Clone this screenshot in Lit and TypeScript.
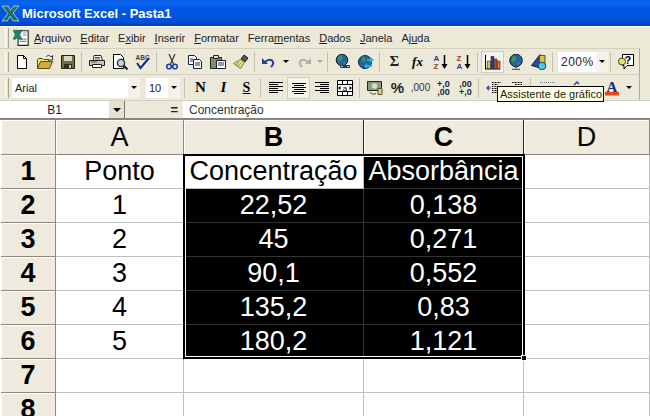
import { LitElement, html, css, svg } from "lit";
import { customElement } from "lit/decorators.js";

const I: Record<string, any> = {
  new: svg`<path d="M3.500 1.500h6l3 3v10h-9z" fill="#fff" stroke="#000"/><path d="M9.500 1.500v3h3" fill="none" stroke="#000"/>`,
  open: svg`<path d="M.500 14.500v-9l1-1h4l1 1h5v2" fill="#f7e488" stroke="#5a4c10"/><path d="M.500 14.500l3-7h12l-3 7z" fill="#cfae3c" stroke="#5a4c10"/><path d="M9 3c1.500-2 3.500-2 5 0l1.500-1.500V6h-4" fill="none" stroke="#333"/>`,
  save: svg`<path d="M1.500 1.500h13v13h-13z" fill="#6f7040" stroke="#22220f"/><path d="M4 2h8v5H4z" fill="#d8d8c8"/><path d="M4 10h8v5H4z" fill="#30301c"/><path d="M9 11h2v3H9z" fill="#ccc"/>`,
  print: svg`<path d="M5 1.500h7l1.500 5h-9z" fill="#fff" stroke="#222"/><path d="M.500 6.500h15v5H.500z" fill="#c8c8c0" stroke="#222"/><path d="M3.500 10.500h9v3h-9z" fill="#fff" stroke="#222"/><path d="M2 8h6M6 3.500h5M6 5h5" stroke="#555"/>`,
  preview: svg`<path d="M1.500 .500h7l3 3v11h-10z" fill="#fff" stroke="#000"/><circle cx="9" cy="9" r="3.600" fill="#bcd8e0" stroke="#333" stroke-width="1.400"/><path d="M11.500 11.500l4 4" stroke="#222" stroke-width="2.200"/>`,
  spell: svg`<text x=".5" y="6" font-family="Liberation Sans" font-size="6.500" font-weight="700" fill="#444">ABC</text><path d="M2 9l3.500 5L14 4" fill="none" stroke="#1a2a8c" stroke-width="2"/>`,
  cut: svg`<path d="M5 0l4.500 10M11 0L6.500 10" stroke="#333" stroke-width="1.200"/><circle cx="5" cy="12.500" r="2.300" fill="none" stroke="#2040a0" stroke-width="1.600"/><circle cx="11" cy="12.500" r="2.300" fill="none" stroke="#2040a0" stroke-width="1.600"/>`,
  copy: svg`<path d="M1.500 1.500h6l2 2v7h-8z" fill="#fff" stroke="#123"/><path d="M6.500 5.500h6l2 2v7h-8z" fill="#fff" stroke="#123"/><path d="M8 9h5M8 11h5M3 5h3M3 7h3" stroke="#235"/>`,
  paste: svg`<path d="M.500 3.500h11v11H.500z" fill="#8a8a60" stroke="#222"/><path d="M3.500 1.500h5v3h-5z" fill="#ddd" stroke="#222"/><path d="M6.500 6.500h9v8h-9z" fill="#fff" stroke="#123"/><path d="M8 9h6M8 11h6" stroke="#235"/>`,
  brush: svg`<path d="M11 1l4 3-3 4-4-3z" fill="#555" stroke="#222"/><path d="M7.500 5.500l4 3-4 6-7-5z" fill="#f0d878" stroke="#776" /><path d="M3 11l3-3M5 12l3-3" stroke="#b09830"/>`,
  undo: svg`<path d="M1 4v6h6z" fill="#24409c"/><path d="M4 8c3-3 7-3 8 0 1 2-1 4-2 5" fill="none" stroke="#24409c" stroke-width="2"/>`,
  redo: svg`<path d="M15 4v6H9z" fill="#b0b0a8"/><path d="M12 8C9 5 5 5 4 8c-1 2 1 4 2 5" fill="none" stroke="#b0b0a8" stroke-width="2"/>`,
  link: svg`<circle cx="7" cy="6" r="5.800" fill="#2560b0" stroke="#123"/><path d="M4 1.500c2 0 3.500 1 3.500 3S4 8 3 7zM8 7l3 1-1 3z" fill="#3a9a40"/><path d="M5.500 11.500h9v2h-9z" fill="#cfcfc8" stroke="#333"/><path d="M8 12.500h4" stroke="#333"/>`,
  web: svg`<circle cx="7" cy="8" r="6.500" fill="#2560b0" stroke="#123"/><path d="M4 2.500c3 0 4 2 3 5l-3 0zM7 10l3 1-1 3z" fill="#3a9a40"/><path d="M9 5h3V2.500l4 3.500-4 3V7H9z" fill="#30b0c8"/><path d="M14 11H9V9l-3 3 3 3v-2h5z" fill="#30b0c8"/>`,
  az: svg`<text x=".5" y="7" font-family="Liberation Sans" font-size="8" font-weight="700" fill="#2a3ca0">A</text><text x=".5" y="15" font-family="Liberation Sans" font-size="8" font-weight="700" fill="#a03a20">Z</text><path d="M11.500 1v10" stroke="#000" stroke-width="1.500"/><path d="M8.500 10h6l-3 5z"/>`,
  za: svg`<text x=".5" y="7" font-family="Liberation Sans" font-size="8" font-weight="700" fill="#a03a20">Z</text><text x=".5" y="15" font-family="Liberation Sans" font-size="8" font-weight="700" fill="#2a3ca0">A</text><path d="M11.500 1v10" stroke="#000" stroke-width="1.500"/><path d="M8.500 10h6l-3 5z"/>`,
  chart: svg`<path d="M.500 1v14h15" fill="#fff" stroke="#000" stroke-width="1.200"/><path d="M2.500 7h3v7.500h-3z" fill="#e0c820" stroke="#222" stroke-width=".6"/><path d="M6 2.500h3v12H6z" fill="#2838a8" stroke="#222" stroke-width=".6"/><path d="M9.500 5h2.500v9.500H9.500z" fill="#d84020" stroke="#222" stroke-width=".6"/><path d="M12.500 7H15v7.500h-2.500z" fill="#e87820" stroke="#222" stroke-width=".6"/>`,
  map: svg`<circle cx="8" cy="6.500" r="6.300" fill="#2560b0" stroke="#123"/><path d="M4.500 2c2.500 0 4 1 4 3S5 8.500 3.500 7.500zM9 8l3 1-1.500 2.500z" fill="#3a9a40"/><path d="M8 13v1.500M4 15.500h8" stroke="#665" stroke-width="1.500"/>`,
  draw: svg`<path d="M9 .500L.500 11.500 9 14z" fill="#2848a8" stroke="#123"/><path d="M8.500 1.500h5.500v8H8.500z" fill="#e0c030" stroke="#553"/><circle cx="11" cy="12" r="3.800" fill="#40d0e0" stroke="#246"/>`,
  help: svg`<path d="M4.500 .500h11v11H9l-3 3.500v-3.500H4.500z" fill="#fff" stroke="#000"/><circle cx="4" cy="7.500" r="3.500" fill="#e8e068" stroke="#443"/><text x="6.500" y="10" font-family="Liberation Sans" font-size="11" font-weight="700" fill="#000">?</text>`,
  left: svg`<path d="M1 2.500h14M1 4.500h9M1 6.500h14M1 8.500h9M1 10.500h14M1 12.500h9" stroke="#000"/>`,
  center: svg`<path d="M1 3.500h14M3 5.500h10M1 7.500h14M3 9.500h10M1 11.500h14M3 13.500h10" stroke="#000"/>`,
  right: svg`<path d="M1 2.500h14M6 4.500h9M1 6.500h14M6 8.500h9M1 10.500h14M6 12.500h9" stroke="#000"/>`,
  merge: svg`<path d="M.500 .500h15v15H.500z" fill="#fff" stroke="#000"/><path d="M1 4.500h14M1 11.500h14M5.500 1v3M10.500 1v3M5.500 12v3M10.500 12v3" stroke="#000"/><text x="8" y="10.500" text-anchor="middle" font-family="Liberation Sans" font-size="8" fill="#000">a</text><path d="M1 8l2.500-2v4zM15 8l-2.500-2v4z"/>`,
  money: svg`<path d="M.500 1.500h14v9H.500z" fill="#8a9c80" stroke="#222"/><circle cx="7.500" cy="6" r="2.800" fill="#d4dcc8"/><path d="M3 12c1 2.500 4 2.500 6 1.500" fill="none" stroke="#333"/><path d="M11 8.500h4v6h-4z" fill="#e8d068" stroke="#553"/>`,
  indent: svg`<path d="M6 2.500h9M6 4.500h6M6 6.500h9M6 8.500h6M6 10.500h6M6 12.500h6" stroke="#000" stroke-dasharray="1 .5"/><path d="M5 8H1M3 6L1 8l2 2" fill="none" stroke="#2a3ca0" stroke-width="1.200"/>`,
  outdent: svg`<path d="M3 2.500h10M6 4.500h7M6 6.500h7M6 8.500h7M6 10.500h7" stroke="#000" stroke-dasharray="1 .5"/>`,
  dots: svg`<path d="M0 2.500h16" stroke="#777" stroke-dasharray="1 1"/>`,
  caret: svg`<path d="M5 5l3-3 2 2" fill="none" stroke="#24409c" stroke-width="1.500"/>`,
  fontA: svg`<text x="8" y="11.500" text-anchor="middle" font-family="Liberation Serif" font-size="15" font-weight="700" fill="#1a2a8c">A</text><path d="M1 12h14v3.500H1z" fill="#e84818"/>`,
};

const sp = (w: number) => html`<span class="sp" style="width:${w}px"></span>`;
const isvg = (n: string) => html`<svg class="ico" viewBox="0 0 16 16">${I[n]}</svg>`;
const sep = html`<i class="sep"></i>`;
const grip = html`<i class="grip"></i>`;
const btn = (n: string, w = 23, cls = "") => html`<span class="btn ${cls}" style="width:${w}px">${isvg(n)}</span>`;
const txt = (t: string, cls: string, w = 23) => html`<span class="btn ${cls}" style="width:${w}px">${t}</span>`;
const arrow = (w: number, cls = "") => html`<span class="arr ${cls}" style="width:${w}px"></span>`;

const rows: [string, string, string, string][] = [
  ["1", "Ponto", "Concentração", "Absorbância"],
  ["2", "1", "22,52", "0,138"],
  ["3", "2", "45", "0,271"],
  ["4", "3", "90,1", "0,552"],
  ["5", "4", "135,2", "0,83"],
  ["6", "5", "180,2", "1,121"],
  ["7", "", "", ""],
  ["8", "", "", ""],
];

@customElement("app-root")
export class AppRoot extends LitElement {
  static styles = css`
    :host { display: block; width: 650px; height: 416px; overflow: hidden; position: relative; background: #ece9d8; font-family: "Liberation Sans", Arial, sans-serif; color: #000; }
    .title { height: 26px; display: flex; align-items: center; gap: 3px; padding-left: 2px; box-sizing: border-box; color: #fff; font: 700 13px "Liberation Sans", sans-serif; background: linear-gradient(#0a5ce8 0, #0a66f0 3px, #0058e6 8px, #0054e0 18px, #0048cc 24px, #0040b0 26px); }
    .title svg { width: 17px; height: 17px; flex: none; }
    .menu { height: 22px; display: flex; align-items: center; font-size: 11px; color: #222; border-top: 1px solid #fff; box-sizing: border-box; padding-left: 5px; }
    .menu .mi { margin-right: 9px; }
    .menu .doc { width: 18px; height: 18px; margin: 0 3px; flex: none; }
    .tb { height: 26px; display: flex; align-items: center; box-sizing: border-box; padding-left: 5px; border-top: 1px solid #d4d0c0; width: 640px; border-right: 1px solid #b0ac9c; }
    .grip { width: 2px; height: 20px; border-left: 1px solid #fff; border-right: 1px solid #a8a494; margin-right: 1px; flex: none; }
    .sp { flex: none; display: block; height: 1px; }
    .sep { width: 1px; height: 20px; background: #c4c0b0; margin: 0 3px 0 2px; flex: none; }
    .btn { display: inline-flex; align-items: center; justify-content: center; height: 22px; flex: none; box-sizing: border-box; }
    .ico { width: 16px; height: 16px; display: block; }
    .pressed { background: #f4f3ec; outline: 1px solid #d0ccbc; outline-offset: -1px; }
    .bi { font: 700 15px "Liberation Serif", serif; }
    .it { font-style: italic; }
    .un { text-decoration: underline; font-size: 14px; }
    .sym { font: 700 15px "Liberation Serif", serif; color: #222; }
    .fx { font: italic 700 13px "Liberation Serif", serif; }
    .pc { font: 700 15px "Liberation Sans", sans-serif; color: #222; }
    .tiny { font-size: 10px; color: #333; }
    .dec { font: 700 9px/8px "Liberation Sans", sans-serif; color: #223; white-space: pre; text-align: right; }
    .arr { display: inline-flex; align-items: center; justify-content: center; height: 22px; flex: none; }
    .arr::after { content: ""; border: 3px solid transparent; border-top: 3px solid #000; border-bottom: 0; }
    .arr.dis::after { border-top-color: #a8a8a0; }
    .combo { display: inline-flex; align-items: center; height: 20px; background: #fff; font-size: 11px; color: #222; box-sizing: border-box; padding-left: 3px; flex: none; }
    .combo span { flex: 1; }
    .combo .arr { flex: none; width: 12px; background: #f4f2ea; height: 20px; }
    .combo.big { font-size: 12px; letter-spacing: .5px; }
    .fbar { height: 20px; display: flex; align-items: stretch; font-size: 12px; border-top: 1px solid #d4d0c0; box-sizing: border-box; color: #222; }
    .name { width: 109px; background: #fff; text-align: center; line-height: 19px; box-sizing: border-box; }
    .drop { width: 16px; background: #e6e2d2; border-right: 1px solid #777; border-bottom: 1px solid #777; box-sizing: border-box; display: flex; align-items: center; justify-content: center; height: 18px; }
    .drop::after { content: ""; border: 4px solid transparent; border-top: 4px solid #000; border-bottom: 0; }
    .eq { width: 58px; text-align: right; padding-right: 5px; font-weight: 700; line-height: 18px; box-sizing: border-box; font-size: 13px; }
    .val { flex: 1; background: #fff; padding-left: 6px; line-height: 19px; color: #333; }
    .sheet { position: absolute; left: 0; top: 118px; width: 650px; height: 298px; overflow: hidden; background: #fff; border-top: 2px solid #8a8678; box-sizing: border-box; }
    .grid { display: grid; margin-left: 1px; grid-template-columns: 55px 128px 180px 160px 126px; grid-template-rows: 35px repeat(8, 34px); font-size: 27px; }
    .c { box-sizing: border-box; border-right: 1px solid #c0c0c0; border-bottom: 1px solid #c0c0c0; display: flex; align-items: center; justify-content: center; white-space: nowrap; overflow: visible; }
    .h { background: #eeeadd; border-right: 1px solid #8c887a; border-bottom: 1px solid #8c887a; box-shadow: inset 1px 1px 0 #fff; }
    .hs { font-weight: 700; border-bottom-color: #000; border-right-color: #222; }
    .rn { font-weight: 700; }
    .s { background: #000; color: #fff; border-color: #333; }
    .a { background: #fff; color: #000; }
    .box { position: absolute; left: 183px; top: 34px; width: 342px; height: 205px; border: 2px solid #000; box-sizing: border-box; pointer-events: none; box-shadow: inset 0 0 0 1px #fff; }
    .hd { position: absolute; right: -4px; bottom: -4px; width: 6px; height: 6px; background: #000; border: 1px solid #fff; box-sizing: border-box; }
    .tip { position: absolute; left: 497px; top: 86px; width: 107px; height: 16px; box-sizing: border-box; background: #ffffe1; border: 1px solid #000; font-size: 11px; line-height: 14px; padding-left: 2px; white-space: nowrap; color: #222; }
  `;

  render() {
    return html`
      <div class="title">
        <svg viewBox="0 0 16 16"><path d="M0 1h6l2 4 3-4h5l-5.500 6.500L16 15h-5.500l-3-4.500L5 15H0l5.500-7z" fill="#1f6f6a" stroke="#cfe8e0" stroke-width=".7"/></svg>
        Microsoft Excel - Pasta1
      </div>
      <div class="menu">
        ${grip}
        <svg class="doc" viewBox="0 0 16 16"><path d="M4.500 1.500h9v13h-9z" fill="#fff" stroke="#222"/><path d="M6 9h6M6 11h6M9 3.500h3M9 5.500h3" stroke="#888"/><path d="M0 1h4l1 2 1.500-2H8L6 5l2 4H5.500L4 7 2.500 9H0l2-4z" fill="#1a8a6a" stroke="#0a4a3a" stroke-width=".4"/></svg>
        <span class="mi"><u>A</u>rquivo</span><span class="mi"><u>E</u>ditar</span><span class="mi">E<u>x</u>ibir</span><span class="mi"><u>I</u>nserir</span><span class="mi"><u>F</u>ormatar</span><span class="mi">Ferra<u>m</u>entas</span><span class="mi"><u>D</u>ados</span><span class="mi"><u>J</u>anela</span><span class="mi">Aj<u>u</u>da</span>
      </div>
      <div class="tb">
        ${grip}
        ${btn("new")}${btn("open")}${btn("save")}${sep}
        ${btn("print")}${btn("preview")}${btn("spell")}${sep}
        ${btn("cut")}${btn("copy")}${btn("paste")}${btn("brush")}${sep}
        ${btn("undo", 21)}${arrow(13)}${btn("redo")}${arrow(10, "dis")}${sep}
        ${btn("link")}${btn("web")}${sep}
        ${txt("Σ", "sym")}${txt("fx", "fx")}${btn("az")}${btn("za")}${sep}
        ${btn("chart", 23, "pressed")}${btn("map")}${btn("draw")}${sep}
        ${sp(2)}<span class="combo big" style="width:50px"><span>200%</span><i class="arr"></i></span>${sep}
        ${btn("help")}
      </div>
      <div class="tb">
        ${grip}${sp(2)}
        <span class="combo" style="width:128px"><span>Arial</span><i class="arr"></i></span>
        ${sp(6)}
        <span class="combo" style="width:34px"><span>10</span><i class="arr"></i></span>${sp(2)}${sep}${sp(1)}
        ${txt("N", "bi")}${txt("I", "bi it")}${txt("S", "bi un")}${sep}
        ${btn("left")}${btn("center", 23, "pressed")}${btn("right")}${btn("merge", 24)}${sep}
        ${btn("money")}${txt("%", "pc")}${txt(",000", "tiny")}
        ${txt("+,0\n,00", "dec")}${txt(",00\n+,0", "dec", 21)}${sep}
        ${btn("indent")}${btn("outdent")}${sep}
        ${btn("dots", 28)}${sp(3)}${btn("caret")}${sp(12)}${btn("fontA")}${arrow(11)}
      </div>
      <div class="fbar">
        <div class="name">B1</div><div class="drop"></div>
        <div class="eq">=</div>
        <div class="val">Concentração</div>
      </div>
      <div class="sheet">
        <div class="grid">
          <div class="c h"></div>
          <div class="c h">A</div>
          <div class="c h hs">B</div>
          <div class="c h hs">C</div>
          <div class="c h">D</div>
          ${rows.map((r, i) => {
            const sel = i < 6;
            return html`
              <div class="c h rn">${r[0]}</div>
              <div class="c">${r[1]}</div>
              <div class="c ${sel ? (i === 0 ? "a" : "s") : ""}">${r[2]}</div>
              <div class="c ${sel ? "s" : ""}">${r[3]}</div>
              <div class="c"></div>`;
          })}
        </div>
        <div class="box"><i class="hd"></i></div>
      </div>
      <div class="tip">Assistente de gráfico</div>
    `;
  }
}
